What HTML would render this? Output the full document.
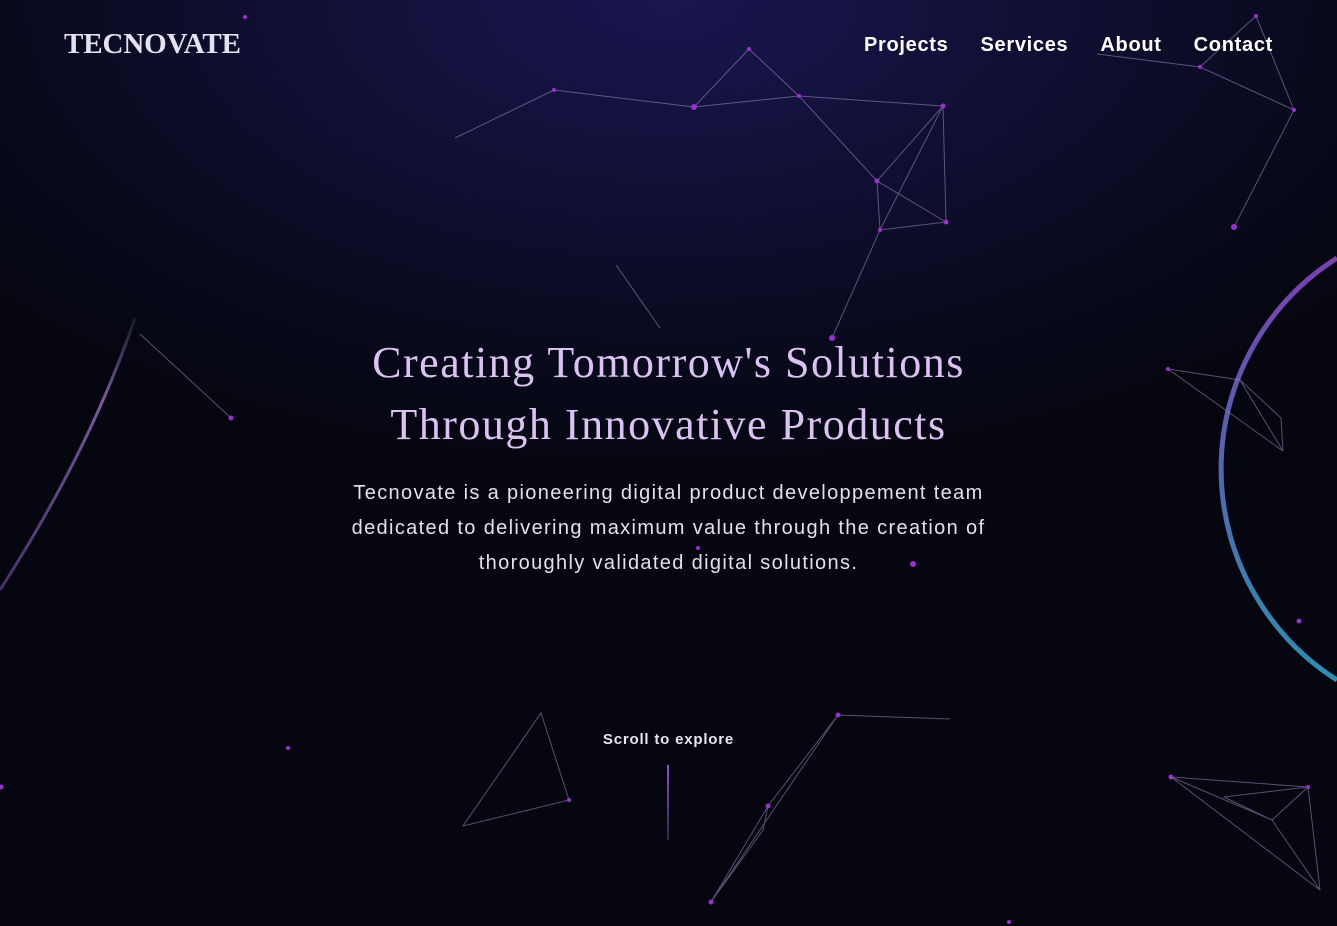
<!DOCTYPE html>
<html><head><meta charset="utf-8"><style>
html,body{margin:0;padding:0;width:1337px;height:926px;overflow:hidden;background:#05060f;}
body{position:relative;font-family:"Liberation Sans",sans-serif;
background:radial-gradient(ellipse 900px 480px at 50% 0%,#1a1650 0%,#110f35 40%,#080a1c 75%,#05060f 100%),#05060f;}
.logo{position:absolute;left:64px;top:28px;font-family:"Liberation Serif",serif;font-size:29px;font-weight:bold;color:#e4e2ee;letter-spacing:-0.1px;}
nav{position:absolute;top:34px;right:64px;display:flex;gap:32px;}
nav a{color:#fff;font-weight:bold;font-size:20px;letter-spacing:0.7px;text-decoration:none;}
h1{position:absolute;left:0;width:1337px;top:332px;margin:0;text-align:center;font-family:"Liberation Serif",serif;font-weight:normal;font-size:44px;line-height:62px;color:#dcc2f2;letter-spacing:1.5px;}
p{position:absolute;left:0;width:1337px;top:476px;margin:0;text-align:center;font-size:20px;line-height:35px;letter-spacing:1.35px;color:#e2e2ea;}
.scroll{position:absolute;left:0;width:1337px;top:731px;text-align:center;font-size:15px;font-weight:bold;letter-spacing:0.8px;color:#e6e6ee;}
.bar{position:absolute;left:667px;top:765px;width:2px;height:75px;background:linear-gradient(#8a4fd0,#2a2a40);}
svg{position:absolute;left:0;top:0;}
</style></head><body>
<svg width="1337" height="926">
<defs><linearGradient id="g" x1="0" y1="0" x2="0" y2="1"><stop offset="0" stop-color="#7a3fb0"/><stop offset="1" stop-color="#2a8fb0"/></linearGradient>
<linearGradient id="g2" x1="0" y1="0" x2="0" y2="1"><stop offset="0" stop-color="#6a5a90" stop-opacity="0.2"/><stop offset="0.3" stop-color="#7a5a9a"/><stop offset="1" stop-color="#5a3a80" stop-opacity="0.8"/></linearGradient></defs>
<path d="M1337 258 A250 250 0 0 0 1337 680" fill="none" stroke="url(#g)" stroke-width="5"/>
<path d="M135 318 Q90 450 0 590" fill="none" stroke="url(#g2)" stroke-width="3"/>
<g stroke="#9a90c0" stroke-width="1" fill="none" opacity="0.55">
<path d="M455 138 L554 90 L694 107 L749 49 L799 96 L694 107 M799 96 L877 181 L943 106 L946 222 L877 181 L880 230 L946 222 M943 106 L880 230 L832 338 M799 96 L943 106"/>
<path d="M1097 54 L1200 67 L1256 16 L1294 110 L1200 67 M1294 110 L1234 227"/>
<path d="M616 265 L660 328 M140 334 L231 418"/>
<path d="M1168 369 L1240 380 L1281 418 L1283 451 L1240 380 M1168 369 L1283 451"/>
<path d="M541 713 L569 800 L463 826 Z"/>
<path d="M838 715 L950 719 M838 715 L768 806 L763 830 L711 902 L768 806 M838 715 L711 902"/>
<path d="M1171 777 L1308 787 L1272 820 L1224 797 L1308 787 L1320 890 L1272 820 M1171 777 L1272 820 M1171 777 L1320 890"/>
</g>
<g fill="#9a30d0">
<circle cx="245" cy="17" r="2"/><circle cx="554" cy="90" r="2"/><circle cx="694" cy="107" r="3"/><circle cx="749" cy="49" r="2"/><circle cx="799" cy="96" r="2"/><circle cx="877" cy="181" r="2.5"/><circle cx="943" cy="106" r="2.5"/><circle cx="946" cy="222" r="2.5"/><circle cx="880" cy="230" r="2"/><circle cx="832" cy="338" r="3"/><circle cx="1200" cy="67" r="2"/><circle cx="1256" cy="16" r="2"/><circle cx="1294" cy="110" r="2"/><circle cx="1234" cy="227" r="3"/><circle cx="231" cy="418" r="2.5"/><circle cx="913" cy="564" r="3"/><circle cx="698" cy="548" r="2"/><circle cx="1168" cy="369" r="2"/><circle cx="1299" cy="621" r="2.5"/><circle cx="288" cy="748" r="2"/><circle cx="1" cy="787" r="2.5"/><circle cx="569" cy="800" r="2"/><circle cx="838" cy="715" r="2.5"/><circle cx="768" cy="806" r="2.5"/><circle cx="711" cy="902" r="2.5"/><circle cx="1171" cy="777" r="2.5"/><circle cx="1308" cy="787" r="2"/><circle cx="1009" cy="922" r="2"/>
</g>
</svg>
<div class="logo">TECNOVATE</div>
<nav><a>Projects</a><a>Services</a><a>About</a><a>Contact</a></nav>
<h1>Creating Tomorrow's Solutions<br>Through Innovative Products</h1>
<p>Tecnovate is a pioneering digital product developpement team<br>dedicated to delivering maximum value through the creation of<br>thoroughly validated digital solutions.</p>
<div class="scroll">Scroll to explore</div>
<div class="bar"></div>
</body></html>
